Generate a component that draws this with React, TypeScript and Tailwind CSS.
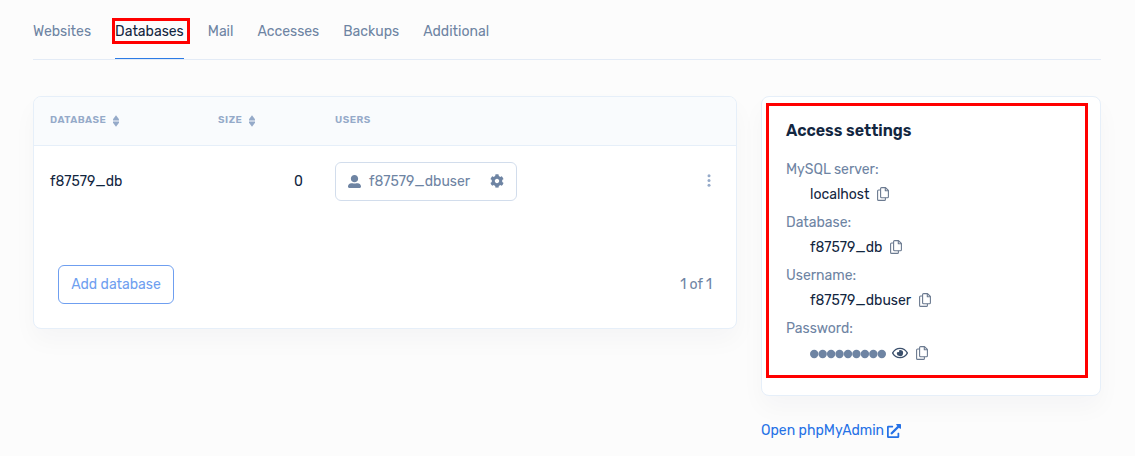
import type { ReactNode } from 'react';
import { FaUserAlt, FaCog, FaRegEye, FaExternalLinkAlt } from 'react-icons/fa';

const TABS = ['Websites', 'Databases', 'Mail', 'Accesses', 'Backups', 'Additional'];

const SETTINGS = [
  { label: 'MySQL server:', value: 'localhost' },
  { label: 'Database:', value: 'f87579_db' },
  { label: 'Username:', value: 'f87579_dbuser' },
];

function SortIcon() {
  return (
    <svg width="6" height="12" viewBox="0 0 6 12" fill="currentColor" aria-hidden="true">
      <path d="M3 0.3 6 4.3V5.4H0V4.3Z" />
      <path d="M3 11.7 6 7.7V6.6H0V7.7Z" />
    </svg>
  );
}

function CopyIcon() {
  return (
    <svg
      width="12"
      height="14"
      viewBox="0 0 12 14"
      fill="none"
      stroke="currentColor"
      strokeWidth="1.1"
      strokeLinejoin="round"
      aria-hidden="true"
    >
      <path d="M4.6 0.6H8.5L11.4 3.5V9.8Q11.4 10.8 10.4 10.8H4.6Q3.6 10.8 3.6 9.8V1.6Q3.6 0.6 4.6 0.6Z" />
      <path d="M8.3 0.8V3.8H11.2" />
      <path d="M3.6 3H1.6Q0.6 3 0.6 4V12.4Q0.6 13.4 1.6 13.4H7.4Q8.4 13.4 8.4 12.4V10.8" />
    </svg>
  );
}

function SettingRow({ label, children }: { label: string; children: ReactNode }) {
  return (
    <div className="mb-[3px]">
      <dt className="h-[25px] leading-[25px] text-[#6e84a3]">{label}</dt>
      <dd className="ml-6 flex h-[25px] items-center">{children}</dd>
    </div>
  );
}

function CopyButton({ name }: { name: string }) {
  return (
    <button type="button" aria-label={`Copy ${name}`} className="ml-2 pb-px text-[#6b7a90]">
      <CopyIcon />
    </button>
  );
}

export default function App() {
  return (
    <div className="min-h-screen bg-[#fcfcfc] pl-[33px] pr-[34px] font-[Rubik,Roboto,sans-serif] text-[14px] text-[#12263f]">
      <nav className="flex h-[60px] gap-6 border-b border-[#e3ebf6]">
        {TABS.map((tab) => {
          const active = tab === 'Databases';
          return (
            <a
              key={tab}
              href="#"
              className={
                active
                  ? 'relative flex items-center border-b border-b-[#2c7be5] pt-1'
                  : 'flex items-center border-b border-transparent pt-1 text-[#6e84a3]'
              }
            >
              {tab}
              {active && (
                <span className="absolute -left-[3px] -right-[6px] top-[18px] h-[26px] border-3 border-[#ff0000]" />
              )}
            </a>
          );
        })}
      </nav>

      <div className="flex items-start gap-6 pt-9">
        <section className="min-w-0 flex-1 overflow-hidden rounded-lg border border-[#e6eff9] bg-white shadow-[0_12px_24px_rgba(18,38,63,0.03)]">
          <table className="w-full table-fixed text-left">
            <thead>
              <tr className="h-12 border-b border-[#e6eff9] bg-[#f9fbfd] text-[10px] uppercase tracking-wider text-[#95aac9]">
                <th className="w-[168px] px-4 font-semibold">
                  <button type="button" className="flex items-center gap-[7px] uppercase">
                    Database <SortIcon />
                  </button>
                </th>
                <th className="w-[117px] px-4 font-semibold">
                  <button type="button" className="flex items-center gap-[7px] uppercase">
                    Size <SortIcon />
                  </button>
                </th>
                <th className="px-4 font-semibold">Users</th>
                <th className="w-14" aria-label="Actions" />
              </tr>
            </thead>
            <tbody>
              <tr className="h-[72px]">
                <td className="px-4">f87579_db</td>
                <td className="px-4 text-right">0</td>
                <td className="px-4">
                  <button
                    type="button"
                    className="flex h-[39px] w-[182px] items-center rounded-md border border-[#d2ddec] px-3 text-[#6e84a3]"
                  >
                    <FaUserAlt size={13} />
                    <span className="ml-2">f87579_dbuser</span>
                    <FaCog size={14} className="ml-auto" />
                  </button>
                </td>
                <td className="pr-[23px]">
                  <button type="button" aria-label="Database menu" className="ml-auto flex w-2 justify-center pb-0.5 text-[#95aac9]">
                    <svg width="4" height="13" viewBox="0 0 4 13" fill="currentColor" aria-hidden="true">
                      <circle cx="2" cy="1.8" r="1.5" />
                      <circle cx="2" cy="6.5" r="1.5" />
                      <circle cx="2" cy="11.2" r="1.5" />
                    </svg>
                  </button>
                </td>
              </tr>
            </tbody>
          </table>
          <div className="mt-12 flex items-center justify-between px-6 pb-6">
            <button
              type="button"
              className="h-[39px] w-[116px] rounded-md border border-[#6f9ff0] text-[#6f9ff0]"
            >
              Add database
            </button>
            <span className="text-[#6e84a3]">1 of 1</span>
          </div>
        </section>

        <aside className="w-[340px] shrink-0">
          <section className="relative rounded-lg border border-[#e6eff9] bg-white px-6 pb-[26px] pt-[22px] shadow-[0_12px_24px_rgba(18,38,63,0.03)]">
            <span className="pointer-events-none absolute bottom-[17px] left-1 right-3 top-1.5 border-3 border-[#ff0000]" />
            <h2 className="mb-3.5 text-[16px] font-semibold leading-6">Access settings</h2>
            <dl>
              {SETTINGS.map(({ label, value }) => (
                <SettingRow key={label} label={label}>
                  {value}
                  <CopyButton name={value} />
                </SettingRow>
              ))}
              <SettingRow label="Password:">
                <svg width="76" height="10" viewBox="0 0 76 10" fill="#6e84a3" role="img" aria-label="Hidden password">
                  {Array.from({ length: 9 }, (_, i) => (
                    <circle key={i} cx={4.2 + i * 8.45} cy="5" r="4.2" />
                  ))}
                </svg>
                <button type="button" aria-label="Show password" className="ml-1.5 pb-0.5 text-[#3b506c]">
                  <FaRegEye size={16} />
                </button>
                <CopyButton name="password" />
              </SettingRow>
            </dl>
          </section>
          <a href="#" className="mt-6 flex items-center gap-[3px] text-[#2571e6]">
            Open phpMyAdmin
            <FaExternalLinkAlt size={14} />
          </a>
        </aside>
      </div>
    </div>
  );
}
